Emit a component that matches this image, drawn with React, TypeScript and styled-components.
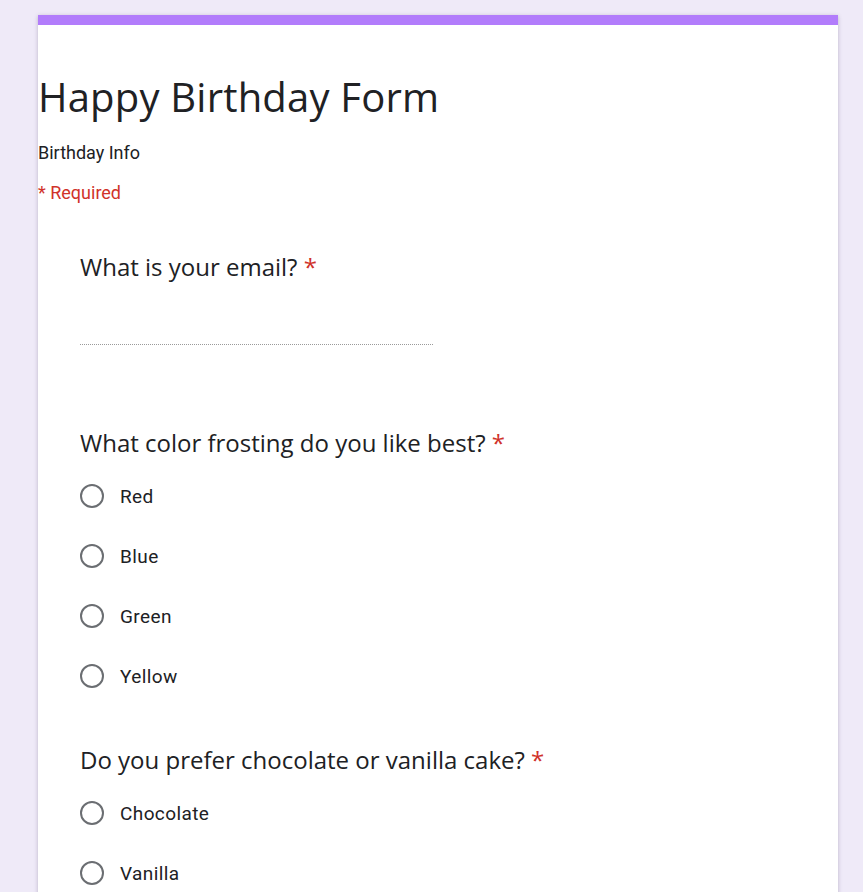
import styled, { createGlobalStyle } from "styled-components";

const GlobalStyle = createGlobalStyle`
  html, body {
    margin: 0;
    padding: 0;
    background-color: #efeaf8;
  }
  body {
    font-family: Roboto, "Liberation Sans", sans-serif;
    color: #202124;
  }
`;

interface IQuestion {
  key: string;
  title: string;
  options?: string[];
}

const questions: IQuestion[] = [
  { key: "email", title: "What is your email?" },
  {
    key: "frosting",
    title: "What color frosting do you like best?",
    options: ["Red", "Blue", "Green", "Yellow"],
  },
  {
    key: "cake",
    title: "Do you prefer chocolate or vanilla cake?",
    options: ["Chocolate", "Vanilla"],
  },
];

const App = () => {
  return (
    <PageStyled>
      <GlobalStyle />
      <CardStyled>
        <HeaderStyled>
          <TitleStyled>Happy Birthday Form</TitleStyled>
          <DescriptionStyled>Birthday Info</DescriptionStyled>
          <RequiredNote>* Required</RequiredNote>
        </HeaderStyled>
        <QuestionList>
          {questions.map((question) => (
            <QuestionStyled key={question.key}>
              <QuestionTitle>
                {question.title} <Asterisk>*</Asterisk>
              </QuestionTitle>
              {question.options ? (
                <OptionList>
                  {question.options.map((option) => (
                    <OptionRow key={option}>
                      <RadioCircle />
                      <OptionLabel>{option}</OptionLabel>
                    </OptionRow>
                  ))}
                </OptionList>
              ) : (
                <TextInputLine />
              )}
            </QuestionStyled>
          ))}
        </QuestionList>
      </CardStyled>
    </PageStyled>
  );
};

export default App;

const PageStyled = styled.div`
  padding: 15px 0 0 38px;
  min-height: 877px;
  overflow: hidden;
`;

const CardStyled = styled.div`
  width: 800px;
  min-height: 960px;
  background-color: #ffffff;
  border-top: 10px solid #b27cfb;
  box-shadow: 0 1px 4px 0 rgba(60, 50, 90, 0.3);
`;

const HeaderStyled = styled.div`
  padding-top: 44px;
`;

const TitleStyled = styled.h1`
  margin: 0;
  font-family: "Open Sans", sans-serif;
  font-weight: 400;
  font-size: 40px;
  line-height: 56px;
  letter-spacing: 0.2px;
  color: #202124;
`;

const DescriptionStyled = styled.div`
  margin-top: 16px;
  font-size: 18px;
  line-height: 24px;
  color: #202124;
`;

const RequiredNote = styled.div`
  margin-top: 16px;
  font-size: 18px;
  line-height: 24px;
  color: #d0322a;
`;

const QuestionList = styled.div`
  display: flex;
  flex-direction: column;
  padding: 47px 42px 0;
  gap: 57px;
`;

const QuestionStyled = styled.div`
  display: flex;
  flex-direction: column;
`;

const QuestionTitle = styled.div`
  font-family: "Open Sans", sans-serif;
  font-size: 24px;
  line-height: 30px;
  color: #202124;
`;

const Asterisk = styled.span`
  color: #d0322a;
`;

const TextInputLine = styled.div`
  width: 353px;
  margin-top: 62px;
  margin-bottom: 26px;
  border-bottom: 1px dotted #9a9a9a;
`;

const OptionList = styled.div`
  display: flex;
  flex-direction: column;
  gap: 36px;
  margin-top: 26px;
`;

const OptionRow = styled.div`
  display: flex;
  align-items: center;
  height: 24px;
`;

const RadioCircle = styled.div`
  box-sizing: border-box;
  width: 24px;
  height: 24px;
  border: 2px solid #6b6e72;
  border-radius: 50%;
  flex-shrink: 0;
`;

const OptionLabel = styled.span`
  margin-left: 16px;
  font-size: 19px;
  letter-spacing: 0.4px;
  color: #202124;
`;
